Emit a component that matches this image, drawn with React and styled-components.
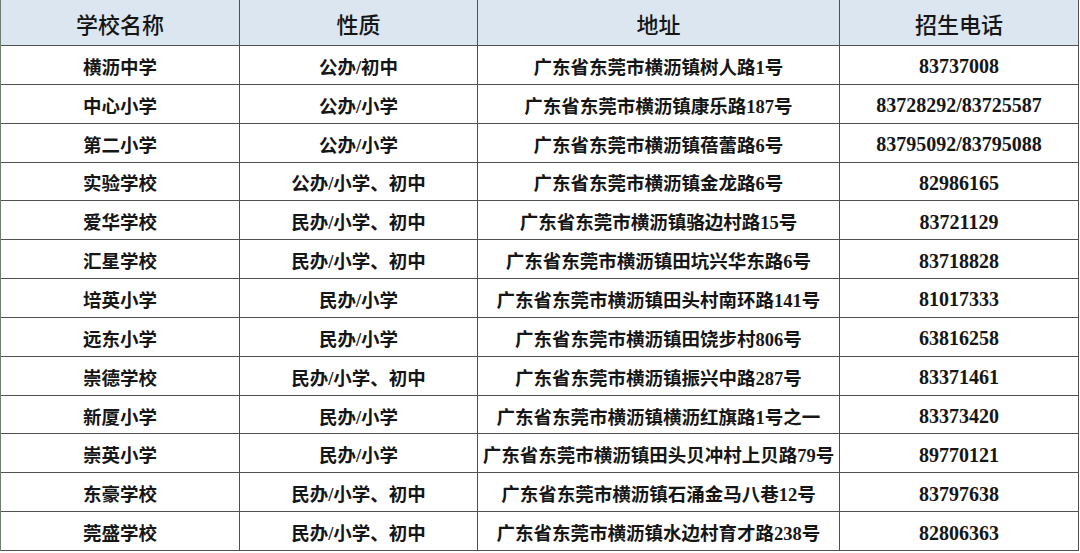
import React from "react";
import styled, { createGlobalStyle } from "styled-components";

const Global = createGlobalStyle`
  html, body { margin: 0; padding: 0; background: #ffffff; }
  body { font-family: "Liberation Serif", "Noto Sans CJK SC", serif; }
`;

const Table = styled.div`
  display: grid;
  grid-template-columns: 239px 238px 362px 239px;
  grid-template-rows: 46px repeat(13, 1fr);
  width: 1079px;
  height: 551px;
  border-left: 1px solid #6f7f6f;
  box-sizing: border-box;
  background: #ffffff;
`;

const Cell = styled.div`
  display: flex;
  align-items: center;
  justify-content: center;
  box-sizing: border-box;
  border-right: 1px solid #505050;
  border-bottom: 1px solid #505050;
  color: #161616;
  white-space: nowrap;
  padding-top: ${(p) => (p.$head ? "0" : p.$num ? "4px" : "2px")};
  font-size: ${(p) => (p.$head ? "22px" : p.$num ? "20px" : "18.5px")};
  font-weight: ${(p) => (p.$head ? 500 : 700)};
  background: ${(p) => (p.$head ? "#dce6f1" : "#ffffff")};
`;

const headers = ["学校名称", "性质", "地址", "招生电话"];

const rows = [
  ["横沥中学", "公办/初中", "广东省东莞市横沥镇树人路1号", "83737008"],
  ["中心小学", "公办/小学", "广东省东莞市横沥镇康乐路187号", "83728292/83725587"],
  ["第二小学", "公办/小学", "广东省东莞市横沥镇蓓蕾路6号", "83795092/83795088"],
  ["实验学校", "公办/小学、初中", "广东省东莞市横沥镇金龙路6号", "82986165"],
  ["爱华学校", "民办/小学、初中", "广东省东莞市横沥镇骆边村路15号", "83721129"],
  ["汇星学校", "民办/小学、初中", "广东省东莞市横沥镇田坑兴华东路6号", "83718828"],
  ["培英小学", "民办/小学", "广东省东莞市横沥镇田头村南环路141号", "81017333"],
  ["远东小学", "民办/小学", "广东省东莞市横沥镇田饶步村806号", "63816258"],
  ["崇德学校", "民办/小学、初中", "广东省东莞市横沥镇振兴中路287号", "83371461"],
  ["新厦小学", "民办/小学", "广东省东莞市横沥镇横沥红旗路1号之一", "83373420"],
  ["崇英小学", "民办/小学", "广东省东莞市横沥镇田头贝冲村上贝路79号", "89770121"],
  ["东豪学校", "民办/小学、初中", "广东省东莞市横沥镇石涌金马八巷12号", "83797638"],
  ["莞盛学校", "民办/小学、初中", "广东省东莞市横沥镇水边村育才路238号", "82806363"],
];

export default function App() {
  return (
    <>
      <Global />
      <Table>
        {headers.map((h) => (
          <Cell key={h} $head>
            {h}
          </Cell>
        ))}
        {rows.map((r, i) =>
          r.map((c, j) => (
            <Cell key={i + "-" + j} $num={j === 3}>
              {c}
            </Cell>
          ))
        )}
      </Table>
    </>
  );
}
